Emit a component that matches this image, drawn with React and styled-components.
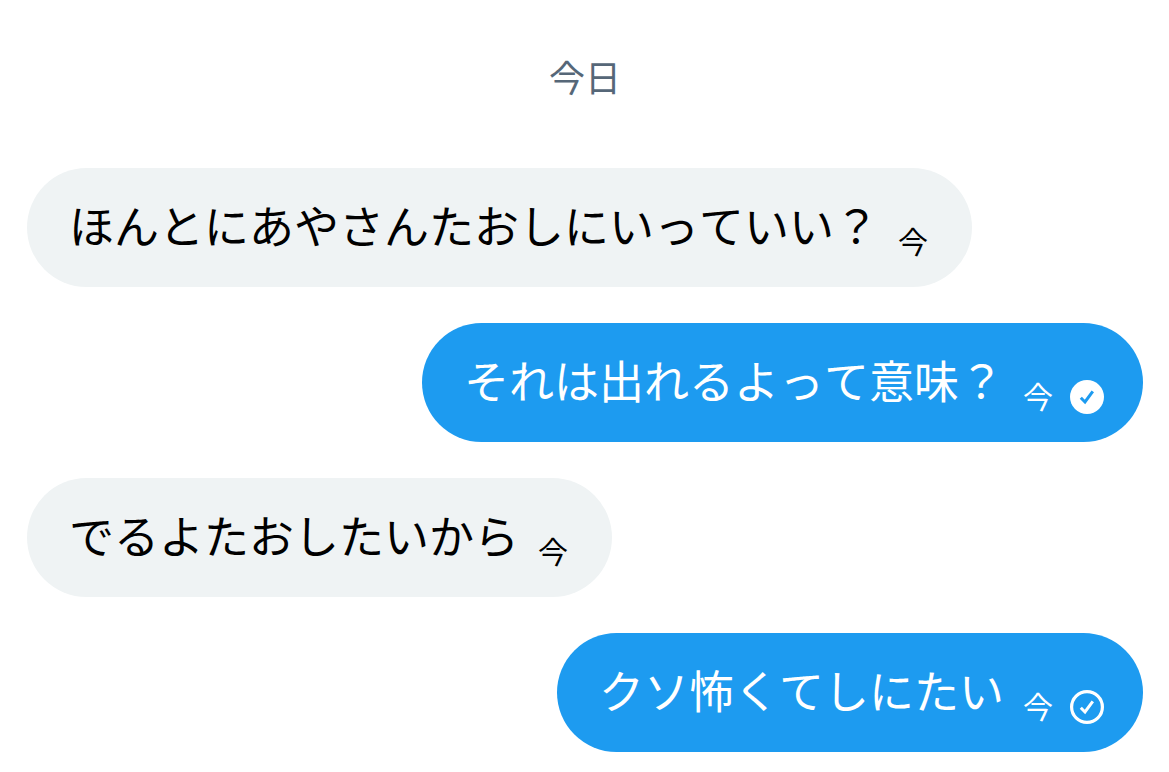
import React from 'react'
import styled, { createGlobalStyle } from 'styled-components'

const GlobalStyle = createGlobalStyle`
  * {
    box-sizing: border-box;
  }
  body {
    margin: 0;
    background: #ffffff;
    font-family: 'Noto Sans CJK JP', sans-serif;
    font-kerning: none;
  }
`

const messages = [
  { id: 1, text: 'ほんとにあやさんたおしにいっていい？', time: '今' },
  { id: 2, text: 'それは出れるよって意味？', time: '今', mine: true, status: 'read' },
  { id: 3, text: 'でるよたおしたいから', time: '今' },
  { id: 4, text: 'クソ怖くてしにたい', time: '今', mine: true, status: 'sent' }
]

// filled when read, outlined when only sent
const StatusIcon = ({ status }) => {
  const read = status === 'read'
  return (
    <StyledStatusIcon viewBox="0 0 36 36" aria-hidden="true">
      <circle
        cx="18"
        cy="18"
        r={read ? 17 : 15.4}
        fill={read ? '#ffffff' : 'none'}
        stroke={read ? 'none' : '#ffffff'}
        strokeWidth="3.2"
      />
      <path
        d="M11.8 18.8l4.2 4.2 7.8-10.6"
        fill="none"
        stroke={read ? '#1d9bf0' : '#ffffff'}
        strokeWidth="3"
      />
    </StyledStatusIcon>
  )
}

const Message = ({ text, time, mine, status }) => (
  <Bubble $mine={mine}>
    <Text>{text}</Text>
    <Meta>
      <Time>{time}</Time>
      {status && <StatusIcon status={status} />}
    </Meta>
  </Bubble>
)

const App = () => (
  <Conversation>
    <GlobalStyle />
    <DateLabel>今日</DateLabel>
    <MessageList>
      {messages.map(message => (
        <Message key={message.id} {...message} />
      ))}
    </MessageList>
  </Conversation>
)

const Conversation = styled.main`
  padding: 48px 26px 20px 27px;
`

const DateLabel = styled.h2`
  margin: 0 0 64px;
  color: #566778;
  font-size: 36px;
  font-weight: 400;
  line-height: 56px;
  text-align: center;
`

const MessageList = styled.ol`
  display: flex;
  flex-direction: column;
  gap: 36px;
  margin: 0;
  padding: 0;
  list-style: none;
`

const Bubble = styled.li`
  display: flex;
  align-items: flex-end;
  align-self: ${props => (props.$mine ? 'flex-end' : 'flex-start')};
  gap: 19px;
  max-width: 100%;
  padding: 26px ${props => (props.$mine ? 38 : 44)}px 27px 42px;
  border-radius: 60px;
  background: ${props => (props.$mine ? '#1d9bf0' : '#eff3f4')};
  color: ${props => (props.$mine ? '#ffffff' : '#000000')};
`

const Text = styled.p`
  margin: 0;
  padding-bottom: 5px;
  font-size: 45px;
  line-height: 61px;
`

const Meta = styled.div`
  display: flex;
  align-items: flex-start;
  gap: 16px;
  min-height: 36px;
`

const Time = styled.span`
  font-size: 30px;
  line-height: 32px;
`

const StyledStatusIcon = styled.svg`
  flex: none;
  width: 36px;
  height: 36px;
`

export default App
